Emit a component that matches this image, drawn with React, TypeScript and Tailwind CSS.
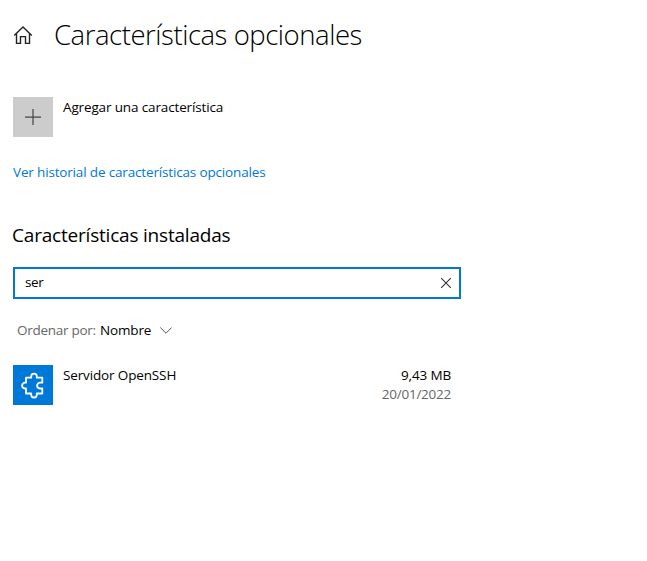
import React from 'react';

function HomeIcon() {
  return (
    <svg className="block h-5 w-5" viewBox="0 0 20 20" fill="none" stroke="#222" strokeWidth="1.4">
      <path d="M1.2 10.6 10 2 18.8 10.6" />
      <path d="M3.5 8.7V18.4H7.5V11.6H12.5V18.4H16.5V8.7" />
    </svg>
  );
}

function PuzzleIcon() {
  return (
    <svg className="block h-10 w-10" viewBox="0 0 40 40" fill="none" stroke="white" strokeWidth="1.8" strokeLinejoin="round">
      <path d="M13 12.7H18.2V11.5A2.8 2.8 0 0 1 23.8 11.5V12.7H29.3V17.7H27A2.9 2.9 0 0 0 27 23.5H29.3V28.5H23.8V29.7A2.8 2.8 0 0 1 18.2 29.7V28.5H13V23.5H12A2.9 2.9 0 0 1 12 17.7H13Z" />
    </svg>
  );
}

export default function App() {
  return (
    <main className="h-[561px] w-[647px] overflow-hidden bg-white pl-3 font-['Open_Sans','Noto_Sans',sans-serif] text-[13.5px] leading-5 tracking-[-0.14px] text-black">
      <header className="flex h-[97px] items-start pt-[15px]">
        <div className="ml-px mt-[10px] w-[41px]"><HomeIcon /></div>
        <h1 className="whitespace-nowrap text-[27.5px] font-[340] leading-10 tracking-[-0.46px]">Características opcionales</h1>
      </header>
      <button className="ml-px flex h-10 items-start gap-2.5 text-left tracking-[-0.14px]">
        <span className="block h-10 w-10 bg-[#ccc]">
          <svg className="block h-10 w-10" viewBox="0 0 40 40" stroke="#444" strokeWidth="1.2"><path d="M12 20.1H28M20 12V28" /></svg>
        </span>
        <span className="whitespace-nowrap">Agregar una característica</span>
      </button>
      <a className="ml-px mt-[25px] block w-fit whitespace-nowrap tracking-[-0.16px] text-[#0078d7]">Ver historial de características opcionales</a>
      <h2 className="mt-[38px] whitespace-nowrap text-[19px] leading-[30px] tracking-[-0.2px]">Características instaladas</h2>
      <div className="ml-px mt-[17px] flex h-8 w-[448px] items-center justify-between border-2 border-[#0078d7] pl-2.5 pr-[7px]">
        <span className="-mt-[2px] tracking-[-0.4px]">ser</span>
        <svg className="block h-3 w-3" viewBox="0 0 12 12" stroke="#333" strokeWidth="1.1"><path d="M1.2 1.2 10.8 10.8M10.8 1.2 1.2 10.8" /></svg>
      </div>
      <div className="ml-[5px] mt-[21px] flex h-5 items-center whitespace-nowrap">
        <span className="w-[83px] tracking-[-0.27px] text-[#666]">Ordenar por:</span>
        <span className="w-[60px]">Nombre</span>
        <svg className="block h-3 w-3" viewBox="0 0 12 12" fill="none" stroke="#555"><path d="M.3 3.5 6 9.2 11.7 3.5" /></svg>
      </div>
      <div className="ml-px mt-[25px] flex w-[438px] items-start">
        <div className="h-10 w-10 bg-[#0078d7]"><PuzzleIcon /></div>
        <span className="ml-2.5 whitespace-nowrap">Servidor OpenSSH</span>
        <div className="ml-auto mt-px text-right leading-[19px]">
          <div>9,43 MB</div>
          <div className="tracking-[-0.25px] text-[#666]">20/01/2022</div>
        </div>
      </div>
    </main>
  );
}
